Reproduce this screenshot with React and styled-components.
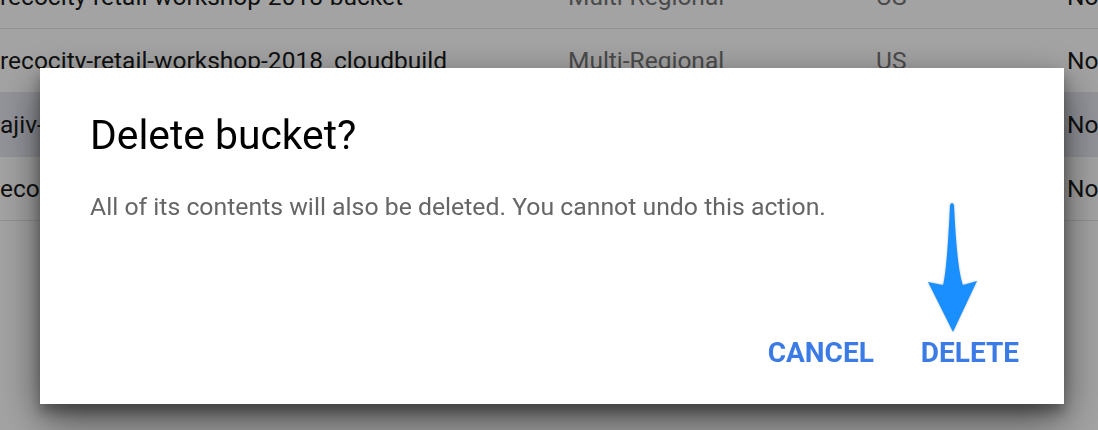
import styled, { createGlobalStyle } from "styled-components";

const GlobalStyle = createGlobalStyle`
  html, body {
    margin: 0;
    padding: 0;
    background: #ffffff;
    overflow: hidden;
  }
  body {
    font-family: Roboto, "Liberation Sans", Arial, sans-serif;
  }
`;

const Page = styled.div`
  width: 1098px;
  height: 430px;
  overflow: hidden;
  background: #ffffff;
`;

const Table = styled.div`
  margin-top: -35px;
  display: flex;
  flex-direction: column;
`;

const Row = styled.div`
  display: grid;
  grid-template-columns: 568px 308px 191px 200px;
  align-items: center;
  height: 64px;
  border-bottom: 1px solid #e6e6e6;
  box-sizing: border-box;
  background: ${props => (props.$highlight ? "#e6e8f1" : "#ffffff")};
  font-size: 24.5px;
  white-space: nowrap;
`;

const Cell = styled.div`
  color: ${props => (props.$muted ? "#757575" : "#1a1a1a")};
`;

const Overlay = styled.div`
  position: fixed;
  inset: 0;
  background: rgba(0, 0, 0, 0.36);
  display: flex;
  align-items: flex-start;
  padding: 68px 0 0 40px;
`;

const Dialog = styled.div`
  position: relative;
  width: 1024px;
  height: 336px;
  box-sizing: border-box;
  background: #ffffff;
  padding: 43px 23px 23px 50px;
  display: flex;
  flex-direction: column;
  box-shadow: 0 16px 40px rgba(0, 0, 0, 0.55), 0 8px 12px rgba(0, 0, 0, 0.3);
`;

const Title = styled.h2`
  margin: 0;
  font-size: 40.8px;
  line-height: 48px;
  font-weight: 400;
  color: #000000;
`;

const Body = styled.p`
  margin: 32px 0 0;
  font-size: 24.8px;
  line-height: 32px;
  color: #666666;
`;

const Actions = styled.div`
  margin-top: auto;
  display: flex;
  justify-content: flex-end;
  gap: 3px;
`;

const Button = styled.button`
  border: none;
  background: transparent;
  padding: 10px 22px;
  font-family: Roboto, "Liberation Sans", Arial, sans-serif;
  font-size: 28px;
  line-height: 36px;
  font-weight: 700;
  color: #3b7be6;
  cursor: pointer;
`;

const Arrow = styled.svg`
  position: absolute;
  left: 885px;
  top: 132px;
  filter: drop-shadow(0 0 1px rgba(0, 0, 0, 0.25));
`;

const rows = [
  { name: "recocity-retail-workshop-2018-bucket", cls: "Multi-Regional", loc: "US", extra: "None" },
  { name: "recocity-retail-workshop-2018_cloudbuild", cls: "Multi-Regional", loc: "US", extra: "None" },
  { name: "ajiv-cloud-storage-demo", cls: "Multi-Regional", loc: "US", extra: "None", highlight: true },
  { name: "econ-dataset-bucket", cls: "Multi-Regional", loc: "US", extra: "None" },
];

export default function App() {
  return (
    <Page>
      <GlobalStyle />
      <Table>
        {rows.map((row) => (
          <Row key={row.name} $highlight={row.highlight}>
            <Cell>{row.name}</Cell>
            <Cell $muted>{row.cls}</Cell>
            <Cell $muted>{row.loc}</Cell>
            <Cell>{row.extra}</Cell>
          </Row>
        ))}
      </Table>
      <Overlay>
        <Dialog>
          <Title>Delete bucket?</Title>
          <Body>All of its contents will also be deleted. You cannot undo this action.</Body>
          <Actions>
            <Button>CANCEL</Button>
            <Button>DELETE</Button>
          </Actions>
          <Arrow width="56" height="136" viewBox="0 0 56 136">
            <path
              d="M25 5 Q27 1 29 5 Q32 70 38 85 L52 81 L28 132 L3 82 L18 85 Q22 70 25 5 Z"
              fill="#1a8fff"
            />
          </Arrow>
        </Dialog>
      </Overlay>
    </Page>
  );
}
